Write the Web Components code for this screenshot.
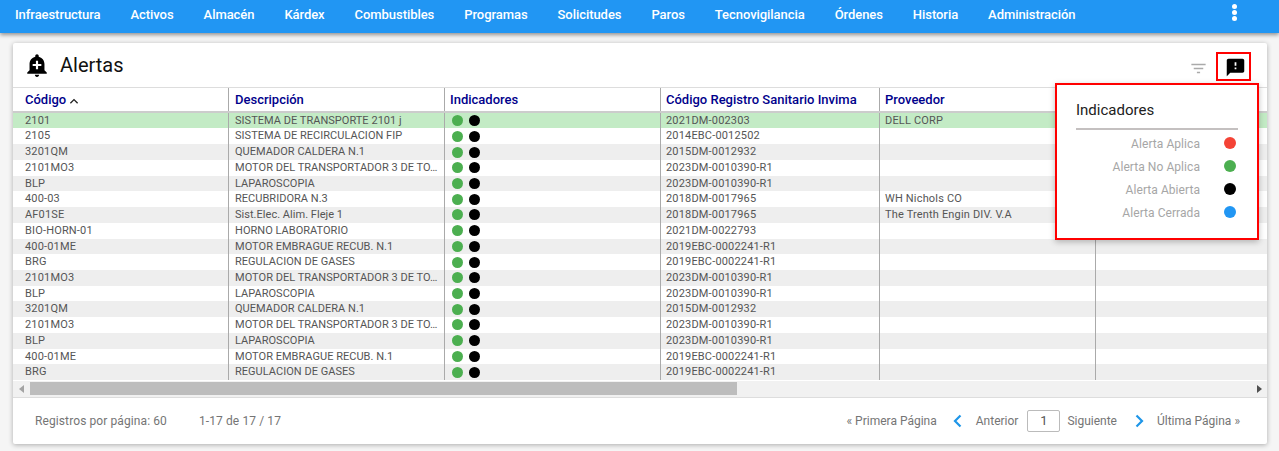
<!DOCTYPE html>
<html lang="es"><head><meta charset="utf-8"><title>Alertas</title>
<style>
html,body{margin:0;padding:0;height:451px;overflow:hidden;background:#f5f5f5;font-family:Roboto,"Liberation Sans",sans-serif}
</style></head><body>
<app-nav></app-nav>
<alert-card></alert-card>
<script>
class AppNav extends HTMLElement{constructor(){super();const items=['Infraestructura','Activos','Almacén','Kárdex','Combustibles','Programas','Solicitudes','Paros','Tecnovigilancia','Órdenes','Historia','Administración'];
this.attachShadow({mode:'open'}).innerHTML=`<style>
:host{display:flex;height:33px;background:#2196f3;box-shadow:0 2px 4px rgba(0,0,0,.4);position:relative;z-index:2;align-items:center;padding-left:15px;box-sizing:border-box}
nav{display:flex;gap:30px;font:500 13px/30px Roboto,sans-serif;color:#fff;height:33px;letter-spacing:-.06px}
nav span{display:block}
.more{margin-left:auto;margin-right:42px;align-self:flex-start;margin-top:4px;display:flex;flex-direction:column;gap:1.2px}
.more i{display:block;width:5px;height:5px;border-radius:50%;background:#fff}
</style><nav>${items.map(i=>`<span>${i}</span>`).join('')}</nav><div class="more"><i></i><i></i><i></i></div>`}}
customElements.define('app-nav',AppNav);

class StatusDot extends HTMLElement{constructor(){super();this.attachShadow({mode:'open'}).innerHTML=`<style>:host{display:block;width:var(--s,11px);height:var(--s,11px);border-radius:50%;background:var(--c,#4caf50)}</style>`}
connectedCallback(){this.style.setProperty('--c',this.getAttribute('color'))}}
customElements.define('status-dot',StatusDot);

class DataTable extends HTMLElement{constructor(){super();
const rows=[['2101','SISTEMA DE TRANSPORTE 2101 j','2021DM-002303','DELL CORP'],['2105','SISTEMA DE RECIRCULACION FIP','2014EBC-0012502',''],['3201QM','QUEMADOR CALDERA N.1','2015DM-0012932',''],['2101MO3','MOTOR DEL TRANSPORTADOR 3 DE TO…','2023DM-0010390-R1',''],['BLP','LAPAROSCOPIA','2023DM-0010390-R1',''],['400-03','RECUBRIDORA N.3','2018DM-0017965','WH Nichols CO'],['AF01SE','Sist.Elec. Alim. Fleje 1','2018DM-0017965','The Trenth Engin DIV. V.A'],['BIO-HORN-01','HORNO LABORATORIO','2021DM-0022793',''],['400-01ME','MOTOR EMBRAGUE RECUB. N.1','2019EBC-0002241-R1',''],['BRG','REGULACION DE GASES','2019EBC-0002241-R1',''],['2101MO3','MOTOR DEL TRANSPORTADOR 3 DE TO…','2023DM-0010390-R1',''],['BLP','LAPAROSCOPIA','2023DM-0010390-R1',''],['3201QM','QUEMADOR CALDERA N.1','2015DM-0012932',''],['2101MO3','MOTOR DEL TRANSPORTADOR 3 DE TO…','2023DM-0010390-R1',''],['BLP','LAPAROSCOPIA','2023DM-0010390-R1',''],['400-01ME','MOTOR EMBRAGUE RECUB. N.1','2019EBC-0002241-R1',''],['BRG','REGULACION DE GASES','2019EBC-0002241-R1','']];
this.attachShadow({mode:'open'}).innerHTML=`<style>
:host{display:block;--cols:216px 216px 216px 219px 216px 171px}
.r{display:grid;grid-template-columns:var(--cols)}
.h{height:25.75px;box-sizing:border-box;border-top:1px solid #ddd;border-bottom:2px solid #ccc;font:500 13px/23px Roboto,sans-serif;color:#00008b}
.h div{padding-left:5px;border-right:1px solid #aaa;box-sizing:border-box;white-space:nowrap;display:flex;align-items:center;overflow:hidden}
.h div:first-child{padding-left:12px}.h div:last-child{border:0}
.body{height:267.75px;overflow:hidden}
.b{height:15.73px;font:400 11px/15px Roboto,sans-serif;color:#555;letter-spacing:.17px}
.b:nth-child(even){background:#fff}.b:nth-child(odd){background:#eee}.b:first-child{background:#c3ebc5}
.b div{padding-left:5px;border-right:1px solid #aaa;box-sizing:border-box;white-space:nowrap;overflow:hidden}
.b div:first-child{padding-left:12px}.b div:nth-child(2){padding-left:6px;letter-spacing:.03px}.b div:last-child{border:0}
.b div.dots{display:flex;gap:6px;align-items:center;padding-left:7px}
svg{margin:3px 0 0 1px}
</style>
<div class="r h"><div>Código<svg width="14" height="14" viewBox="0 0 24 24"><path d="M12 8l-7 7 1.600 1.600L12 11.200l5.400 5.400L19 15z" fill="#222"/></svg></div><div style="padding-left:6px">Descripción</div><div>Indicadores</div><div>Código Registro Sanitario Invima</div><div>Proveedor</div><div></div></div>
<div class="body">${rows.map(r=>`<div class="r b"><div>${r[0]}</div><div>${r[1]}</div><div class="dots"><status-dot color="#4caf50"></status-dot><status-dot color="#000"></status-dot></div><div>${r[2]}</div><div>${r[3]}</div><div></div></div>`).join('')}</div>`}}
customElements.define('data-table',DataTable);

class ScrollBar extends HTMLElement{constructor(){super();this.attachShadow({mode:'open'}).innerHTML=`<style>
:host{display:flex;align-items:center;height:16.25px;background:#f1f1f1;border-bottom:1px solid #ddd;box-sizing:content-box}
.t{margin-left:17px;width:707px;height:13px;background:#bdbdbd}
.l,.r{width:0;height:0;border-style:solid;border-color:transparent}
.l{margin-left:6px;margin-right:-11px;border-width:4px 5px 4px 0;border-right-color:#a3a3a3}
.r{margin-left:auto;margin-right:5px;border-width:4px 0 4px 5px;border-left-color:#505050}
</style><i class="l"></i><div class="t"></div><i class="r"></i>`}}
customElements.define('scroll-bar',ScrollBar);

class PagerBar extends HTMLElement{constructor(){super();this.attachShadow({mode:'open'}).innerHTML=`<style>
:host{display:flex;align-items:center;height:46px;font:400 12px/16px Roboto,sans-serif;color:#757575;padding:0 27px 0 22px;letter-spacing:.1px}
.sp{margin-left:32px}.right{margin-left:auto;display:flex;align-items:center;letter-spacing:0}
.box{width:31px;height:20px;border:1px solid #bbb;border-radius:2px;box-sizing:content-box;text-align:center;line-height:20px;font-size:13px;margin:0 7px 0 9px;color:#555}
svg{display:block}
</style><span>Registros por página: 60</span><span class="sp">1-17 de 17 / 17</span>
<div class="right"><span>« Primera Página</span>
<svg style="margin:0 14px 0 16px" width="9" height="14" viewBox="0 0 9 14"><path d="M7.500 1.500L2 7l5.500 5.500" fill="none" stroke="#1e96e8" stroke-width="2.200"/></svg>
<span>Anterior</span><div class="box">1</div><span>Siguiente</span>
<svg style="margin:0 13px 0 18px" width="9" height="14" viewBox="0 0 9 14"><path d="M1.500 1.500L7 7l-5.500 5.500" fill="none" stroke="#1e96e8" stroke-width="2.200"/></svg>
<span>Última Página »</span></div>`}}
customElements.define('pager-bar',PagerBar);

class LegendPopup extends HTMLElement{constructor(){super();const items=[['Alerta Aplica','#f44336'],['Alerta No Aplica','#4caf50'],['Alerta Abierta','#000'],['Alerta Cerrada','#2196f3']];
this.attachShadow({mode:'open'}).innerHTML=`<style>
:host{display:block;position:absolute;left:1042px;top:40px;width:204px;height:157px;box-sizing:border-box;background:#fff;border:2px solid #f00;box-shadow:0 2px 6px rgba(0,0,0,.25);padding:0 19px;z-index:3}
h3{margin:0;font:400 15px/20px Roboto,sans-serif;color:#212121;padding-top:15px;height:28px;border-bottom:2px solid #c4c0c0;box-sizing:content-box}
.i{display:flex;justify-content:flex-end;align-items:center;height:23px;font:400 12px/16px Roboto,sans-serif;color:#a6a6a6;gap:24px;--s:12px;letter-spacing:.06px}
.i span{position:relative;top:1px}
.i status-dot{margin-right:2px}
.list{padding-top:1px}
</style><h3>Indicadores</h3><div class="list">${items.map(([t,c])=>`<div class="i"><span>${t}</span><status-dot color="${c}"></status-dot></div>`).join('')}</div>`}}
customElements.define('legend-popup',LegendPopup);

class AlertCard extends HTMLElement{constructor(){super();this.attachShadow({mode:'open'}).innerHTML=`<style>
:host{display:block;position:relative;margin:10px 12px 0 13px;width:1254px;height:401px;background:#fff;box-shadow:0 1px 5px rgba(0,0,0,.3);border-radius:2px}
header{display:flex;align-items:center;height:44px;padding-left:11px;box-sizing:border-box}
h1{margin:0 0 0 10px;font:400 20px/24px Roboto,sans-serif;color:#111}
.tools{margin-left:auto;display:flex;align-items:center;margin:3px 16px 0 auto;gap:7px}
.btn{width:35px;height:29px;border:2px solid #f00;box-sizing:border-box;display:flex;align-items:center;justify-content:center}
</style><header>
<svg width="26" height="26" viewBox="0 0 24 24"><path d="M10.010 21.010c0 1.100.890 1.990 1.990 1.990s1.990-.890 1.990-1.990h-3.980zm8.870-4.190V11c0-3.250-2.250-5.970-5.280-6.690v-.720C13.600 2.710 12.880 2 12 2s-1.600.710-1.600 1.590v.720C7.370 5.030 5.120 7.750 5.120 11v5.820L3 18.940V20h18v-1.060l-2.120-2.120zM16 13.010h-3v3h-2v-3H8V11h3V8h2v3h3v2.010z"/></svg>
<h1>Alertas</h1><div class="tools">
<svg width="19" height="19" viewBox="0 0 24 24" style="margin:3px 1px 0 0"><path fill="#aaa" d="M10 18h4v-2h-4v2zM3 6v2h18V6H3zm3 7h12v-2H6v2z"/></svg>
<div class="btn"><svg width="21" height="21" viewBox="0 0 24 24" style="margin:2px 0 0 3px"><path d="M20 2H4c-1.100 0-1.990.900-1.990 2L2 22l4-4h14c1.100 0 2-.900 2-2V4c0-1.100-.900-2-2-2zm-7 12h-2v-2h2v2zm0-4h-2V6h2v4z"/></svg></div>
</div></header>
<data-table></data-table><scroll-bar></scroll-bar><pager-bar></pager-bar><legend-popup></legend-popup>`}}
customElements.define('alert-card',AlertCard);
</script>
</body></html>
